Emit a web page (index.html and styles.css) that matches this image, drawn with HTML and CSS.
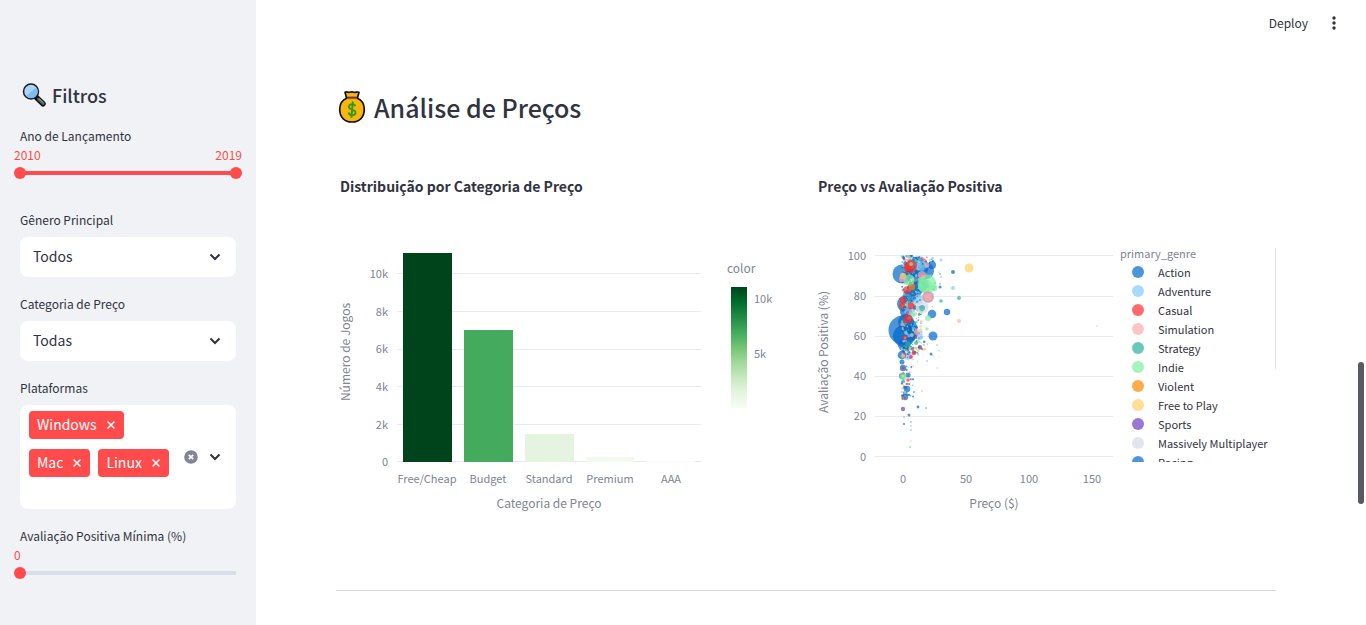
FILE: index.html
```html
<!DOCTYPE html>
<html lang="pt">
<head>
<meta charset="utf-8">
<title>Análise de Preços</title>
<link rel="stylesheet" href="styles.css">
</head>
<body>
<aside class="sidebar">
  <h2 class="sidebar-title">
    <svg class="lens" viewBox="0 0 24 24" aria-hidden="true">
      <path d="M14.5 14.5l6.500 6.300" stroke="#111" stroke-width="5.400" stroke-linecap="round"/>
      <path d="M16.500 16l4.700 4.600" stroke="#566" stroke-width="2.800" stroke-linecap="round"/>
      <path d="M17.500 16.200l3.500 3.400" stroke="#9aa3a3" stroke-width="1" stroke-linecap="round"/>
      <circle cx="9" cy="8.500" r="7.500" fill="#a9d5f7" stroke="#1b1d20" stroke-width="1.500"/>
      <path d="M4.500 12.800L14 4.500a6.200 6.200 0 0 1-9.500 8.300z" fill="#7dbdf0"/>
    </svg>
    Filtros
  </h2>

  <div class="field slider-field">
    <label class="label" for="year-min">Ano de Lançamento</label>
    <div class="slider">
      <div class="values"><output>2010</output><output>2019</output></div>
      <div class="track track-full">
        <input class="range" id="year-min" type="range" min="2010" max="2019" value="2010">
        <input class="range" type="range" min="2010" max="2019" value="2019" aria-label="Ano final">
      </div>
    </div>
  </div>

  <div class="field">
    <label class="label" for="genre">Gênero Principal</label>
    <div class="select-box">
      <select class="select" id="genre"><option>Todos</option></select>
      <svg class="chevron" viewBox="0 0 12 12" aria-hidden="true"><path d="M1.500 3.500L6 8l4.500-4.500"/></svg>
    </div>
  </div>

  <div class="field">
    <label class="label" for="category">Categoria de Preço</label>
    <div class="select-box">
      <select class="select" id="category"><option>Todas</option></select>
      <svg class="chevron" viewBox="0 0 12 12" aria-hidden="true"><path d="M1.500 3.500L6 8l4.500-4.500"/></svg>
    </div>
  </div>

  <div class="field">
    <label class="label" for="platforms">Plataformas</label>
    <div class="multi">
      <div class="tags">
        <span class="tag"><span class="tag-text">Windows</span><button class="tag-x" aria-label="Remover Windows"><svg viewBox="0 0 8 8"><path d="M.5.5l7 7m0-7l-7 7"/></svg></button></span>
        <span class="tag"><span class="tag-text">Mac</span><button class="tag-x" aria-label="Remover Mac"><svg viewBox="0 0 8 8"><path d="M.5.5l7 7m0-7l-7 7"/></svg></button></span>
        <span class="tag"><span class="tag-text">Linux</span><button class="tag-x" aria-label="Remover Linux"><svg viewBox="0 0 8 8"><path d="M.5.5l7 7m0-7l-7 7"/></svg></button></span>
        <input class="tag-input" id="platforms" type="text">
      </div>
      <div class="multi-actions">
        <button class="clear" aria-label="Limpar"><svg viewBox="0 0 14 14"><circle cx="7" cy="7" r="6.800" fill="#808495"/><path d="M4.800 4.800l4.400 4.400m0-4.400L4.800 9.200" stroke="#fff" stroke-width="1.700"/></svg></button>
        <svg class="chevron" viewBox="0 0 12 12" aria-hidden="true"><path d="M1.500 3.500L6 8l4.500-4.500"/></svg>
      </div>
    </div>
  </div>

  <div class="field slider-field">
    <label class="label" for="rating">Avaliação Positiva Mínima (%)</label>
    <div class="slider">
      <div class="values"><output>0</output></div>
      <div class="track">
        <input class="range" id="rating" type="range" min="0" max="100" value="0">
      </div>
    </div>
  </div>
</aside>

<div class="page">
  <header class="toolbar">
    <button class="deploy">Deploy</button>
    <button class="menu" aria-label="Menu"><svg viewBox="0 0 4 14"><circle cx="2" cy="2" r="1.700"/><circle cx="2" cy="7" r="1.700"/><circle cx="2" cy="12" r="1.700"/></svg></button>
  </header>
  <main class="content">
    <h1 class="title">
      <svg class="bag" viewBox="0 0 28 34" aria-hidden="true">
        <path d="M7 2.200c2-1 3 .5 4.500 0s3-.6 4.500 0 3-.8 5 0l-1.500 5.500h-11z" fill="#fcb50d" stroke="#111" stroke-width="1.700" stroke-linejoin="round"/>
        <path d="M9 8C4 10 1.700 15 1.700 19.500 1.700 27 6.500 32 14 32s12.300-5 12.300-12.500C26.300 15 24 10 19 8z" fill="#fcb50d" stroke="#111" stroke-width="1.700"/>
        <path d="M9 8.300h10" stroke="#a65b17" stroke-width="1.700"/>
        <path d="M17.300 16.300c-.5-1.700-2-2.100-3.400-2-2 .1-3.100 1.200-3 2.700.2 3.400 6.700 2 6.600 5.600 0 1.600-1.500 2.600-3.300 2.600-1.900 0-3.300-.9-3.600-2.700M14.800 11.500l-1.400 16.500" fill="none" stroke="#2c9b20" stroke-width="1.900"/>
      </svg>
      Análise de Preços
    </h1>

    <div class="charts">
      <figure class="chart">
        <figcaption class="chart-title">Distribuição por Categoria de Preço</figcaption>
        <svg class="plot" viewBox="336 205 462 325" role="img" aria-label="Distribuição por Categoria de Preço">
          <defs>
            <linearGradient id="greens" x1="0" y1="0" x2="0" y2="1">
              <stop offset="0" stop-color="#00441b"/><stop offset=".125" stop-color="#006d2c"/>
              <stop offset=".25" stop-color="#238b45"/><stop offset=".375" stop-color="#41ab5d"/>
              <stop offset=".5" stop-color="#74c476"/><stop offset=".625" stop-color="#a1d99b"/>
              <stop offset=".75" stop-color="#c7e9c0"/><stop offset=".875" stop-color="#e5f5e0"/>
              <stop offset="1" stop-color="#f7fcf5"/>
            </linearGradient>
          </defs>
          <path class="grid" d="M397 273.500h304M397 311.500h304M397 349.500h304M397 386.500h304M397 424.500h304M397 461.500h304"/>
          <rect x="403" y="253" width="49" height="209" fill="#00441b"/>
          <rect x="464" y="330" width="49" height="132" fill="#43aa5e"/>
          <rect x="525" y="434" width="49" height="28" fill="#e5f4e0"/>
          <rect x="586" y="457" width="48" height="5" fill="#f2faf0"/>
          <rect x="646" y="461" width="49" height="1" fill="#f7fcf5"/>
          <g class="tick end">
            <text x="388" y="278">10k</text><text x="388" y="316">8k</text><text x="388" y="353">6k</text>
            <text x="388" y="391">4k</text><text x="388" y="429">2k</text><text x="388" y="466">0</text>
          </g>
          <g class="tick mid">
            <text x="427" y="483">Free/Cheap</text><text x="488" y="483">Budget</text><text x="549" y="483">Standard</text>
            <text x="610" y="483">Premium</text><text x="671" y="483">AAA</text>
          </g>
          <text class="axis mid" x="549" y="508">Categoria de Preço</text>
          <text class="axis mid" transform="translate(350 352) rotate(-90)">Número de Jogos</text>
          <text class="axis" x="727" y="273">color</text>
          <rect x="731" y="287" width="16" height="121" fill="url(#greens)"/>
          <g class="tick"><text x="754" y="303">10k</text><text x="754" y="358">5k</text></g>
        </svg>
      </figure>

      <figure class="chart">
        <figcaption class="chart-title">Preço vs Avaliação Positiva</figcaption>
        <svg class="plot" viewBox="814 205 462 325" role="img" aria-label="Preço vs Avaliação Positiva">
          <defs>
            <clipPath id="plot-area"><rect x="875" y="255" width="238" height="207"/></clipPath>
            <clipPath id="legend-area"><rect x="1114" y="245" width="160" height="217"/></clipPath>
          </defs>
          <path class="grid" d="M875 255.500h238M875 296.500h238M875 336.500h238M875 376.500h238M875 416.500h238M875 456.500h238"/>
          <g id="points" clip-path="url(#plot-area)"></g>
          <g class="tick end">
            <text x="866" y="260">100</text><text x="866" y="300">80</text><text x="866" y="340">60</text>
            <text x="866" y="380">40</text><text x="866" y="420">20</text><text x="866" y="461">0</text>
          </g>
          <g class="tick mid">
            <text x="903" y="483">0</text><text x="966" y="483">50</text><text x="1029" y="483">100</text><text x="1092" y="483">150</text>
          </g>
          <text class="axis mid" x="994" y="508">Preço ($)</text>
          <text class="axis mid" transform="translate(828 352) rotate(-90)">Avaliação Positiva (%)</text>
          <text class="legend-title" x="1120" y="258">primary_genre</text>
          <g id="legend" class="legend" clip-path="url(#legend-area)"></g>
          <path d="M1275.500 248v121" stroke="#dfe2e7"/>
        </svg>
      </figure>
    </div>
    <hr class="divider">
  </main>
</div>
<div class="scroll-thumb"></div>
<script src="chart.js"></script>
</body>
</html>
```

FILE: styles.css
```css
* { box-sizing: border-box; }

body {
  margin: 0;
  display: flex;
  min-height: 100vh;
  position: relative;
  background: #fff;
  color: #31333f;
  font: 14px/24px "Noto Sans CJK SC", "Noto Sans", sans-serif;
}

button, select, input { font: inherit; color: inherit; }
button { border: 0; padding: 0; background: none; cursor: pointer; }
h1, h2, figure { margin: 0; }

.sidebar {
  flex: 0 0 256px;
  padding: 83px 20px 24px;
  background: #f0f2f6;
}
.sidebar-title {
  display: flex;
  align-items: center;
  gap: 6px;
  margin-bottom: 17px;
  padding-left: 2px;
  font-size: 18px;
  line-height: 24px;
  font-weight: 500;
}
.lens { width: 24px; height: 24px; fill: none; }

.field { margin-bottom: 15px; }
.slider-field { margin-bottom: 24px; }
.label {
  display: block;
  margin-bottom: 5px;
  font-size: 12px;
}
.slider-field .label { margin-bottom: 0; }

.slider { margin: 0 -6px; }
.values {
  display: flex;
  justify-content: space-between;
  height: 14px;
  color: #ff4b4b;
  font-size: 12px;
  line-height: 14px;
}
.track {
  display: grid;
  align-items: center;
  height: 22px;
  background: linear-gradient(#d9deea, #d9deea) center / calc(100% - 12px) 4px no-repeat;
}
.track-full { background-image: linear-gradient(#ff4b4b, #ff4b4b); }
.range {
  grid-area: 1 / 1;
  width: 100%;
  height: 12px;
  margin: 0;
  appearance: none;
  background: none;
  pointer-events: none;
}
.range::-webkit-slider-thumb {
  appearance: none;
  width: 12px;
  height: 12px;
  border-radius: 50%;
  background: #ff4b4b;
  pointer-events: auto;
}

.select-box {
  display: grid;
  align-items: center;
  height: 40px;
  border-radius: 8px;
  background: #fff;
}
.select {
  grid-area: 1 / 1;
  width: 100%;
  height: 40px;
  padding: 0 40px 2px 13px;
  border: 0;
  background: none;
  appearance: none;
}
.chevron {
  width: 12px;
  height: 12px;
  fill: none;
  stroke: #31333f;
  stroke-width: 2;
  pointer-events: none;
}
.select-box .chevron {
  grid-area: 1 / 1;
  justify-self: end;
  margin-right: 15px;
}

.multi {
  display: flex;
  align-items: center;
  min-height: 104px;
  padding: 6px 15px 6px 9px;
  border-radius: 8px;
  background: #fff;
}
.tags {
  display: flex;
  flex: 1;
  flex-wrap: wrap;
  gap: 10px 8px;
  align-self: flex-start;
}
.tag {
  display: flex;
  align-items: center;
  gap: 10px;
  height: 28px;
  padding: 0 9px 0 8px;
  border-radius: 4px;
  background: #ff4b4b;
  color: #fff;
}
.tag-text { padding-bottom: 2px; }
.tag-x { display: flex; }
.tag-x svg { width: 8px; height: 8px; stroke: #fff; stroke-width: 1.500; }
.tag-input {
  width: 40px;
  height: 16px;
  padding: 0;
  border: 0;
  outline: 0;
  background: none;
}
.multi-actions { display: flex; align-items: center; gap: 11px; }
.clear { display: flex; }
.clear svg { width: 14px; height: 14px; }

.page { flex: 1; min-width: 0; }
.toolbar {
  display: flex;
  align-items: center;
  justify-content: flex-end;
  gap: 24px;
  height: 45px;
  padding-right: 30px;
}
.deploy { font-size: 12px; }
.menu { display: flex; }
.menu svg { width: 4px; height: 14px; fill: #31333f; }

.content { padding: 40px 90px 0 80px; }
.title {
  display: flex;
  align-items: center;
  gap: 8px;
  padding-left: 2px;
  font-size: 25px;
  line-height: 44px;
  font-weight: 500;
}
.bag { width: 28px; height: 34px; }
.charts {
  display: grid;
  grid-template-columns: 1fr 1fr;
  gap: 16px;
  margin-top: 45px;
}
.chart-title {
  height: 31px;
  padding-left: 4px;
  font-size: 14px;
  font-weight: 700;
}
.plot { display: block; width: 100%; }
.plot text { fill: #808495; }
.plot .tick text { font-size: 11px; }
.plot .axis { font-size: 12px; }
.plot .legend-title { font-size: 11px; }
.plot .legend text { fill: #31333f; font-size: 11px; }
.end { text-anchor: end; }
.mid { text-anchor: middle; }
.grid { stroke: #e6eaf1; }
.divider {
  margin: 60px 0 0;
  border: 0;
  border-top: 1px solid #d6d6d8;
}
.scroll-thumb {
  position: absolute;
  top: 362px;
  right: 2px;
  width: 6px;
  height: 142px;
  border-radius: 3px;
  background: #575963;
}
```

FILE: chart.js
```js
const NS = "http://www.w3.org/2000/svg";
const colors = {
  a: "#0068c9", v: "#83c9ff", c: "#ff2b2b", s: "#ffabab", t: "#29b09d",
  i: "#7defa1", o: "#ff8700", f: "#ffd16a", p: "#6d3fc0", m: "#d5dae5"
};

function circle(parent, x, y, r, color) {
  const el = document.createElementNS(NS, "circle");
  el.setAttribute("cx", x);
  el.setAttribute("cy", y);
  el.setAttribute("r", r);
  el.setAttribute("fill", color);
  el.setAttribute("fill-opacity", 0.7);
  parent.append(el);
}

// Seeded generator keeps the cloud of small titles stable between loads.
let seed = 17;
function random() {
  seed = (seed * 16807) % 2147483647;
  return seed / 2147483647;
}

const points = document.getElementById("points");

// Each entry: genre, x, y, radius.
const back = [
  ["a",902,274,9.5],["a",918,267,10.5],["a",926,271,8],["a",932,265,4],["a",903,330,14.5],["a",904,336,11],
  ["a",905,304,8],["a",906,312,6],["a",915,289,8],["a",920,284,8],["a",910,296,7],["a",912,272,7],
  ["a",906,322,8],["a",904,345,6],["a",912,334,6],["v",918,300,5],["v",913,264,6],["v",922,266,5],["v",910,310,5],
  ["a",902,355,4.3],["v",908,356,4],["a",902,362,2.5],["a",903,368,3.2],["a",908,375,2.6],["a",902,376,3],
  ["a",907,389,3.2],["a",905,397,3.2],["a",905,393,2]
];
back.forEach(([g, x, y, r]) => circle(points, x, y, r, colors[g]));

// The dense column of small points near the low end of the price axis.
const mix = "aaaaaaavvvvvccsstiiof";
for (let n = 0; n < 430; n++) {
  const y = 256 + Math.pow(random(), 1.2) * 98;
  const spread = Math.min(random(), random()) * (y < 300 ? 34 : 26);
  circle(points, 902 + spread, y, 0.5 + random() * (n % 6 ? 0.9 : 2), colors[mix[Math.floor(random() * mix.length)]]);
}
for (let n = 0; n < 75; n++) {
  circle(points, 902 + Math.pow(random(), 2) * 12, 345 + random() * 55, 0.4 + random() * 0.9, colors[mix[Math.floor(random() * mix.length)]]);
}
for (let n = 0; n < 35; n++) {
  circle(points, 912 + random() * 30, 258 + random() * 105, 0.4 + random() * 0.5, colors["avsti"[n % 5]]);
}

const front = [
  ["i",927,284,9.5],["i",925,286,7],["i",909,280,5.5],["i",934,288,3.3],["c",911,266,6],["c",908,267,4],["i",911,264,2],
  ["s",922,275,4],["a",928,297,5.5],["s",928,297,6],["s",928,297,4],["m",922,307,6.5],["t",922,308,3],
  ["f",903,276,3.2],["s",902,279,3],["c",907,290,3.8],["o",912,287,3.2],["c",903,300,3.5],["c",902,306,3],
  ["c",911,306,3.3],["c",908,319,4.5],["a",932,314,4.3],["a",947,312,3.2],["a",933,336,4.5],["v",920,337,3],
  ["s",917,332,3],["i",928,318,3],["t",908,344,2.8],["t",916,343,2],["f",969,268,4.5],["a",953,272,2],
  ["v",953,288,2],["t",959,298,2],["s",959,321,2],["v",941,260,1.5],["t",941,301,1.8],["a",940,287,1.5],
  ["i",927,329,1.8],["a",940,274,.8],["t",940,284,.8],["v",941,277,1],["v",933,294,1],["a",931,354,1.5],
  ["v",927,361,1],["s",937,368,.8],["t",937,345,.7],["f",903,356,2],["c",911,357,2],["c",903,368,1.5],
  ["i",903,377,3.5],["f",903,376,1.5],["c",908,380,1.8],["c",907,384,1.3],["s",922,391,.9],["t",914,392,1],
  ["c",905,398,1],["p",903,409,2.2],["a",918,407,1.4],["a",926,408,.8],["a",909,415,1.5],["o",909,415,.7],
  ["c",904,417,.7],["a",904,424,1.1],["s",911,426,1],["i",911,430,1.1],["a",911,422,.7],["s",911,441,.8],
  ["i",910,447,1.2],["s",1097,326,.8]
];
front.forEach(([g, x, y, r]) => circle(points, x, y, r, colors[g]));

const legend = document.getElementById("legend");
const genres = [
  ["Action", "a"], ["Adventure", "v"], ["Casual", "c"], ["Simulation", "s"], ["Strategy", "t"], ["Indie", "i"],
  ["Violent", "o"], ["Free to Play", "f"], ["Sports", "p"], ["Massively Multiplayer", "m"], ["Racing", "a"]
];
genres.forEach(([name, key], row) => {
  circle(legend, 1138, 272 + row * 19, 6, colors[key]);
  const text = document.createElementNS(NS, "text");
  text.setAttribute("x", 1158);
  text.setAttribute("y", 277 + row * 19);
  text.textContent = name;
  legend.append(text);
});
```
